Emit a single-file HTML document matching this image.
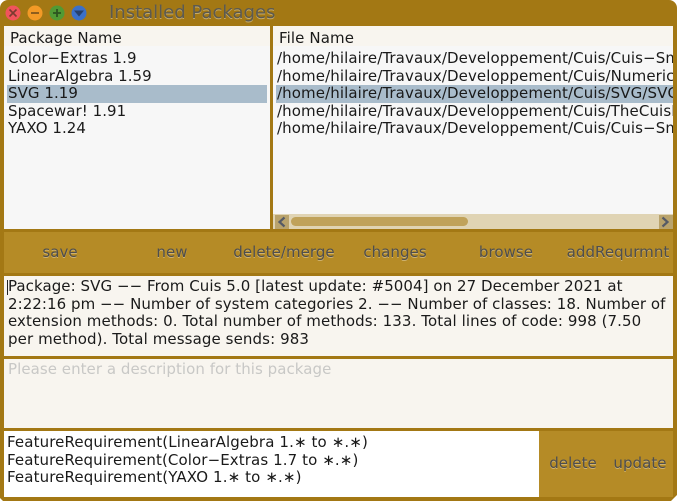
<!DOCTYPE html>
<html><head><meta charset="utf-8"><style>
html,body{margin:0;padding:0;background:#fff}
#w{position:relative;width:677px;height:501px;background:#a37814;overflow:hidden;border-radius:8px 8px 0 0;font-family:"DejaVu Sans",sans-serif;font-size:15px;letter-spacing:.05px;color:#1a1a1a}
.a{position:absolute}
.t{position:absolute;white-space:nowrap;line-height:18px;height:18px}
.b{position:absolute;white-space:nowrap;line-height:18px;color:#4e4e4e;text-shadow:0 1px 0 rgba(225,210,170,.55);text-align:center}
</style></head><body><div id="w">
<svg class="a" style="left:0;top:0" width="92" height="26">
<circle cx="13" cy="13" r="7.500" fill="#f0545c"/><path d="M9.500 9.500l7 7M16.500 9.500l-7 7" stroke="#7a3a30" stroke-width="1.600"/>
<circle cx="35" cy="13" r="7.500" fill="#f39a26"/><path d="M31 13h8" stroke="#80561c" stroke-width="1.800"/>
<circle cx="57" cy="13" r="7.500" fill="#519a34"/><path d="M53 13h8M57 9v8" stroke="#2c5420" stroke-width="1.800"/>
<circle cx="79" cy="13" r="7.500" fill="#3b70c8"/><path d="M74 10.500h10l-5 6z" fill="#27406c"/>
</svg>
<div class="t" style="left:109px;top:2px;font-size:18px;line-height:22px;height:22px;letter-spacing:0;color:#5c5a50;text-shadow:0 1px 0 rgba(220,205,165,.6)">Installed Packages</div>

<div class="a" style="left:4px;top:26px;width:266px;height:203px;background:#f7f7f7"></div>
<div class="a" style="left:4px;top:26px;width:266px;height:20px;background:#f8f5ef"></div>
<div class="t" style="left:10px;top:29px">Package Name</div>
<div class="a" style="left:7px;top:85px;width:260px;height:18px;background:#a9bccb"></div>
<div class="t" style="left:8px;top:49px">Color−Extras 1.9</div>
<div class="t" style="left:8px;top:67px">LinearAlgebra 1.59</div>
<div class="t" style="left:8px;top:84px">SVG 1.19</div>
<div class="t" style="left:8px;top:102px">Spacewar! 1.91</div>
<div class="t" style="left:8px;top:119px">YAXO 1.24</div>

<div class="a" style="left:273px;top:26px;width:400px;height:203px;background:#f7f7f7;overflow:hidden;letter-spacing:.1px">
<div class="a" style="left:0;top:0;width:400px;height:20px;background:#f8f5ef"></div>
<div class="t" style="left:6px;top:3px">File Name</div>
<div class="a" style="left:3px;top:59px;width:397px;height:18px;background:#a9bccb"></div>
<div class="t" style="left:4px;top:23px">/home/hilaire/Travaux/Developpement/Cuis/Cuis−Smalltalk</div>
<div class="t" style="left:4px;top:41px">/home/hilaire/Travaux/Developpement/Cuis/Numerics</div>
<div class="t" style="left:4px;top:58px">/home/hilaire/Travaux/Developpement/Cuis/SVG/SVG.pck</div>
<div class="t" style="left:4px;top:76px">/home/hilaire/Travaux/Developpement/Cuis/TheCuisBook</div>
<div class="t" style="left:4px;top:93px">/home/hilaire/Travaux/Developpement/Cuis/Cuis−Smalltalk</div>
<div class="a" style="left:0;top:188px;width:400px;height:15px;background:#e0d4b4"></div>
<div class="a" style="left:2px;top:189px;width:14px;height:14px;background:#b9a36c"></div>
<div class="a" style="left:386px;top:189px;width:14px;height:14px;background:#b9a36c"></div>
<svg class="a" style="left:0;top:188px" width="400" height="15"><path d="M11.500 3.500L6.500 8l5 4.500" fill="none" stroke="#555a66" stroke-width="2.200"/><path d="M389.500 3.500L394.500 8l-5 4.500" fill="none" stroke="#555a66" stroke-width="2.200"/></svg>
<div class="a" style="left:18px;top:191px;width:177px;height:9px;border-radius:5px;background:#c0a25a"></div>
</div>

<div class="a" style="left:4px;top:232px;width:669px;height:41px;background:#b58b26"></div>
<div class="b" style="left:4px;width:112px;top:243px">save</div>
<div class="b" style="left:116px;width:112px;top:243px">new</div>
<div class="b" style="left:228px;width:112px;top:243px">delete/merge</div>
<div class="b" style="left:339px;width:112px;top:243px">changes</div>
<div class="b" style="left:450px;width:112px;top:243px">browse</div>
<div class="b" style="left:562px;width:112px;top:243px">addRequrmnt</div>

<div class="a" style="left:4px;top:276px;width:669px;height:80px;background:#f8f5ef"></div>
<div class="a" style="left:7px;top:280px;width:1px;height:15px;background:#222"></div>
<div class="t" style="left:8px;top:277px;letter-spacing:.06px">Package: SVG −− From Cuis 5.0 [latest update: #5004] on 27 December 2021 at</div>
<div class="t" style="left:8px;top:295px">2:22:16 pm −− Number of system categories 2. −− Number of classes: 18. Number of</div>
<div class="t" style="left:8px;top:312px;letter-spacing:.09px">extension methods: 0. Total number of methods: 133. Total lines of code: 998 (7.50</div>
<div class="t" style="left:8px;top:330px;letter-spacing:.1px">per method). Total message sends: 983</div>

<div class="a" style="left:4px;top:359px;width:669px;height:69px;background:#f8f5ef"></div>
<div class="t" style="left:8px;top:360px;color:#c8c8c6">Please enter a description for this package</div>

<div class="a" style="left:4px;top:431px;width:535px;height:66px;background:#fff"></div>
<div class="a" style="left:539px;top:431px;width:134px;height:66px;background:#b58b26"></div>
<div class="t" style="left:7px;top:433px;letter-spacing:.12px">FeatureRequirement(LinearAlgebra 1.∗ to ∗.∗)</div>
<div class="t" style="left:7px;top:451px;letter-spacing:.1px">FeatureRequirement(Color−Extras 1.7 to ∗.∗)</div>
<div class="t" style="left:7px;top:468px;letter-spacing:.12px">FeatureRequirement(YAXO 1.∗ to ∗.∗)</div>
<div class="b" style="left:540px;width:66px;top:454px">delete</div>
<div class="b" style="left:607px;width:66px;top:454px">update</div>
<svg class="a" style="left:0;top:495px" width="677" height="6"><path d="M677 0v6h-6z" fill="#fff"/><path d="M0 3v3h3z" fill="#fff"/></svg>
</div></body></html>
